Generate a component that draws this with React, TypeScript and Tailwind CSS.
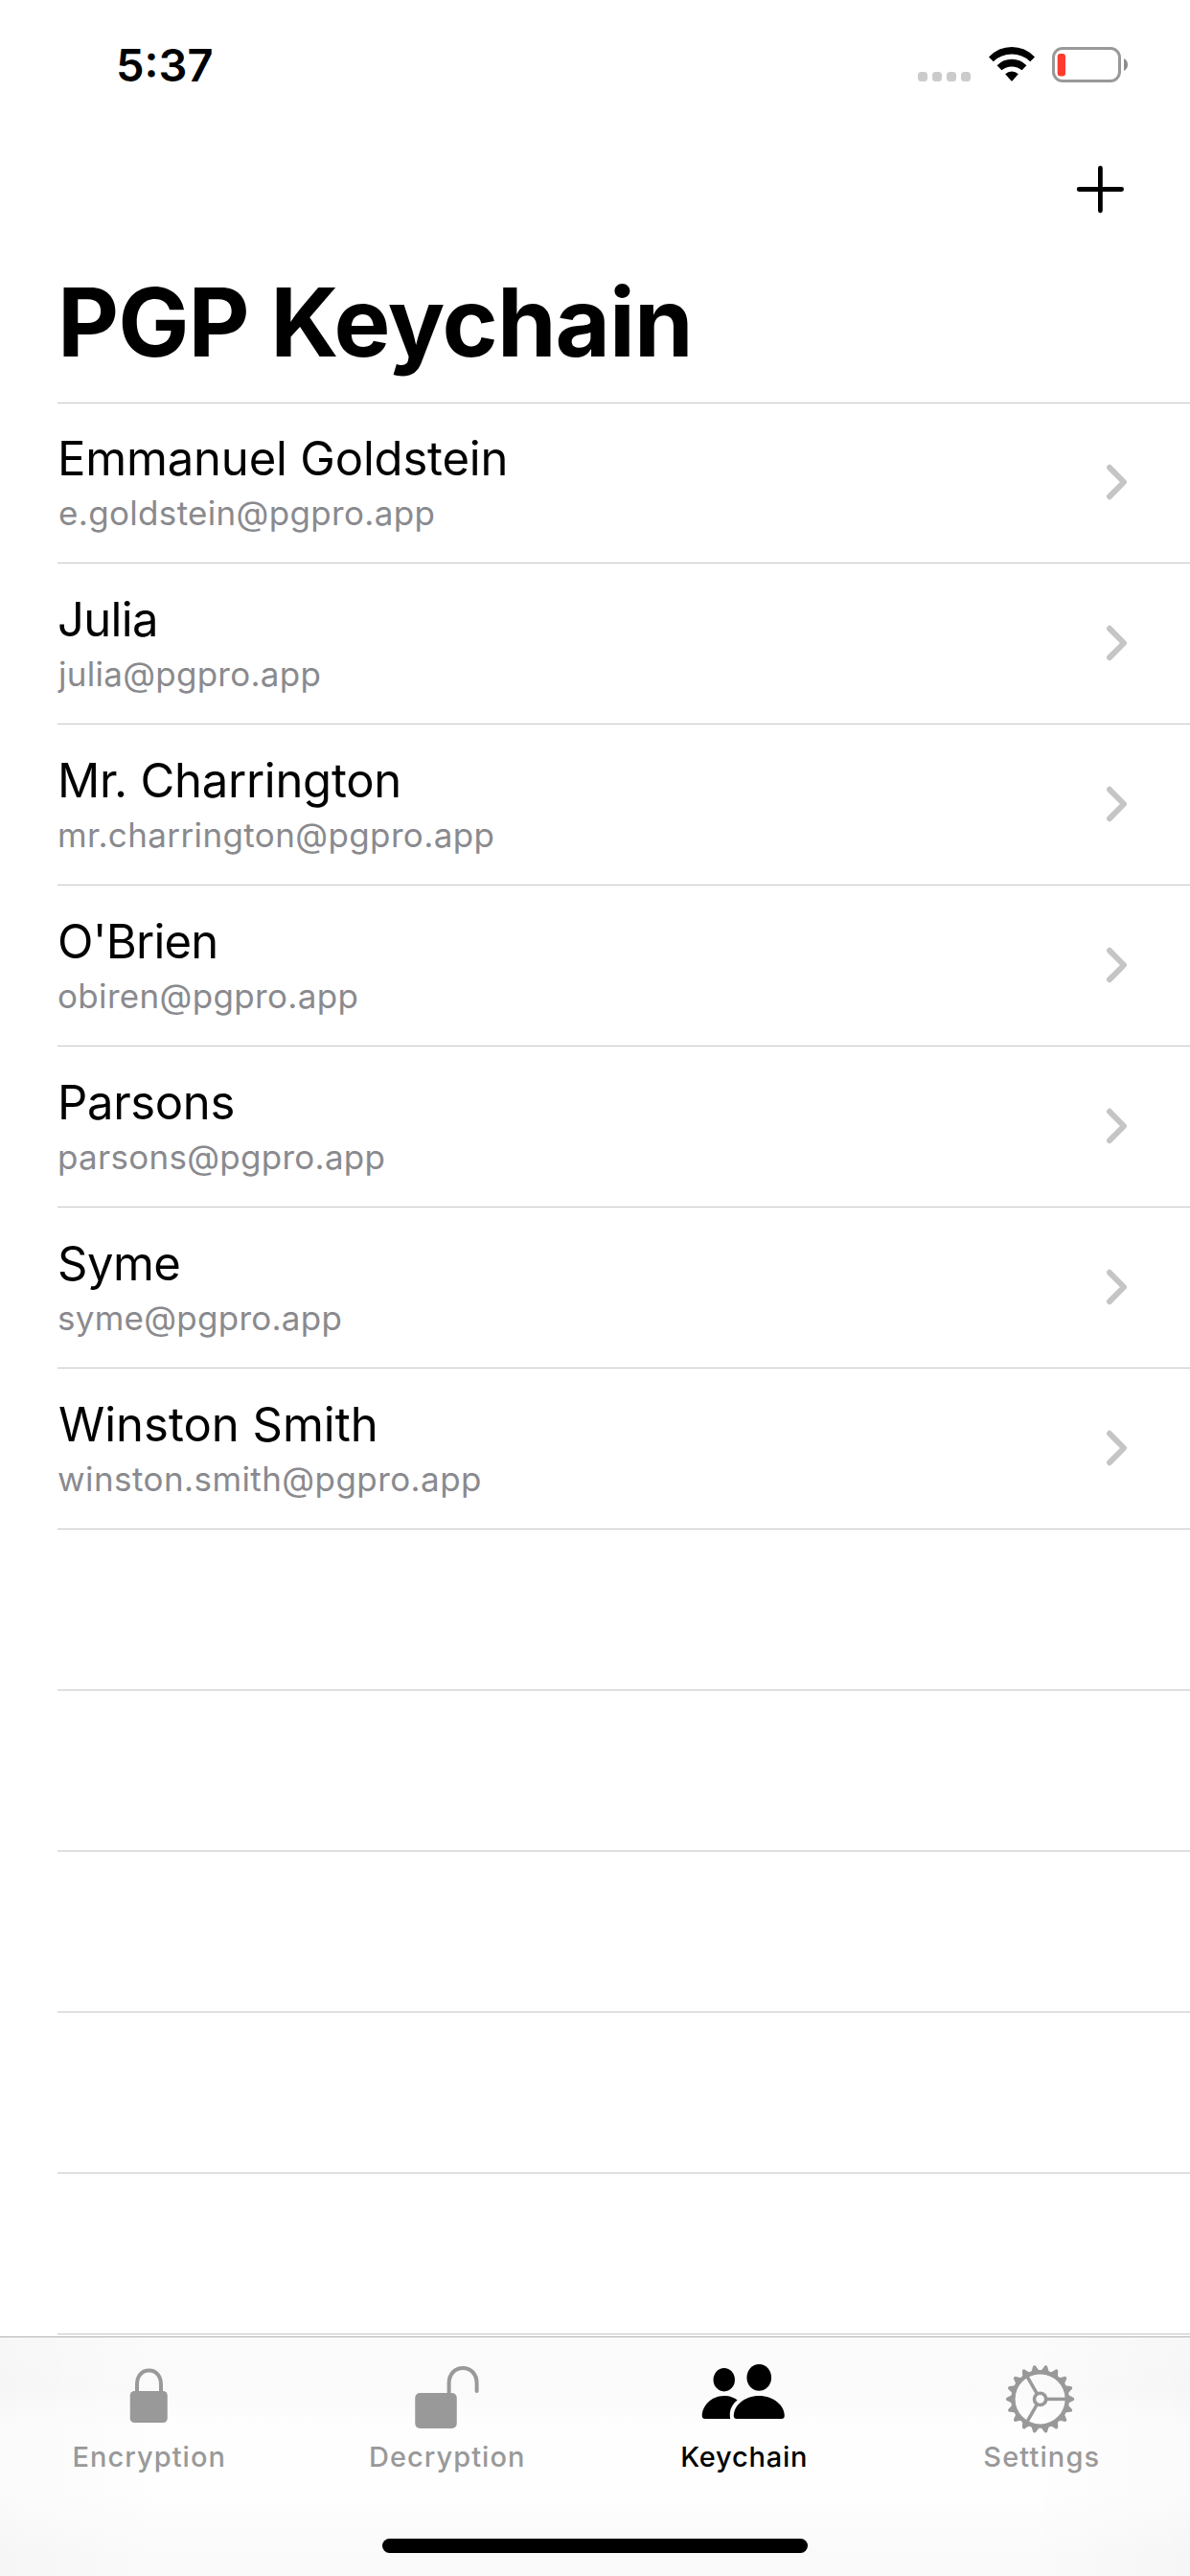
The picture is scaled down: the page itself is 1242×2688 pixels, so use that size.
import type { ReactNode } from "react";

type Contact = { name: string; email: string; nameClass: string; emailClass: string };

const contacts: Contact[] = [
  { name: "Emmanuel Goldstein", email: "e.goldstein@pgpro.app", nameClass: "tracking-[-0.18px]", emailClass: "pl-px tracking-[0.33px]" },
  { name: "Julia", email: "julia@pgpro.app", nameClass: "tracking-[-0.69px]", emailClass: "pl-px tracking-[0.27px]" },
  { name: "Mr. Charrington", email: "mr.charrington@pgpro.app", nameClass: "tracking-[-0.27px]", emailClass: "tracking-[0.38px]" },
  { name: "O'Brien", email: "obiren@pgpro.app", nameClass: "tracking-[-0.76px]", emailClass: "tracking-[0.33px]" },
  { name: "Parsons", email: "parsons@pgpro.app", nameClass: "tracking-[-0.34px]", emailClass: "tracking-[0.28px]" },
  { name: "Syme", email: "syme@pgpro.app", nameClass: "tracking-[-0.53px]", emailClass: "tracking-[0.26px]" },
  { name: "Winston Smith", email: "winston.smith@pgpro.app", nameClass: "pl-px tracking-[-0.02px]", emailClass: "tracking-[0.42px]" },
];

const EMPTY_ROWS = 5;

function SignalDots() {
  return (
    <div className="flex gap-[5px] pt-[75px]">
      {[0, 1, 2, 3].map((i) => (
        <span key={i} className="size-[10px] rounded-[3.5px] bg-[#cbcbcb]" />
      ))}
    </div>
  );
}

function Wifi() {
  return (
    <svg className="ml-[19px] mt-[49px] h-9 w-12" viewBox="0 0 48 36">
      <path d="M0 10.4Q10.2 0 24 0T48 10.4L43.2 15.2Q35 7.6 24 7.6T4.8 15.2Z" />
      <path d="M8.6 19.2Q15.2 12.8 24 12.8T39.4 19.2L34.6 24.2Q30 20.4 24 20.4T13.4 24.2Z" />
      <path d="M17.2 28.2Q20 25.4 24 25.4T30.8 28.2L24.7 35.2Q24 36 23.3 35.2Z" />
    </svg>
  );
}

function Battery() {
  return (
    <svg className="ml-[18px] mt-[49px] h-[37px] w-20" viewBox="0 0 80 37">
      <rect x="1.5" y="1.5" width="69" height="34" rx="9.5" fill="none" stroke="#999" strokeWidth="3" />
      <rect x="5.7" y="7" width="8.3" height="23.5" rx="3" fill="#ff3b30" />
      <path d="M75 12Q79 14.4 79 18.5T75 25Z" fill="#8c8c8c" />
    </svg>
  );
}

function Chevron() {
  return (
    <svg className="mb-[64px] h-10 w-6" viewBox="0 0 24 40" fill="none" stroke="#c5c5c7" strokeWidth="6" strokeLinecap="round" strokeLinejoin="round">
      <path d="M5 4.8 20 20 5 35.2" />
    </svg>
  );
}

function IconBox({ children }: { children: ReactNode }) {
  return (
    <svg className="h-20 w-[90px]" viewBox="0 0 90 80" fill="currentColor">
      {children}
    </svg>
  );
}

function LockIcon() {
  return (
    <IconBox>
      <rect x="25.75" y="35" width="39" height="33" rx="4.5" />
      <path d="M33 37V28C33 19 38.5 13.6 45.5 13.6S58 19 58 28V37" fill="none" stroke="currentColor" strokeWidth="4" />
    </IconBox>
  );
}

function UnlockIcon() {
  return (
    <IconBox>
      <rect x="12.25" y="37" width="43.5" height="37" rx="5" />
      <path d="M47.6 39V27C47.6 17 54 11 62.1 11S76.6 17 76.6 27V35" fill="none" stroke="currentColor" strokeWidth="4" strokeLinecap="round" />
    </IconBox>
  );
}

function PeopleIcon() {
  return (
    <IconBox>
      <ellipse cx="24.75" cy="23.2" rx="11.2" ry="12.2" />
      <ellipse cx="61.25" cy="20.9" rx="12.8" ry="13.9" />
      <path d="M5 64Q1.75 64 1.75 61C1.75 51 11 40 24.75 40C30 40 34.6 41.5 38.6 44.4C32.5 49 29.6 56 31.2 64Z" />
      <path d="M38 64Q34.75 64 34.75 61C34.75 50 46 40 61.25 40S87.75 50 87.75 61Q87.75 64 84.5 64Z" />
    </IconBox>
  );
}

function GearIcon() {
  const teeth = Array.from({ length: 18 }, (_, i) => i * 20);
  return (
    <IconBox>
      <g transform="translate(43.6 43.4)">
        <circle r="28.2" fill="none" stroke="currentColor" strokeWidth="4.4" />
        <circle r="6.1" fill="none" stroke="currentColor" strokeWidth="3.6" />
        {teeth.map((a) => (
          <path key={a} transform={`rotate(${a})`} d="M29 -4.8 30.6 -3.6 34.2 -1.8Q35.6 -1.4 35.6 0T34.2 1.8L30.6 3.6 29 4.8Z" />
        ))}
        {[0, 120, 240].map((a) => (
          <path key={a} transform={`rotate(${a})`} d="M7 0H28" stroke="currentColor" strokeWidth="3.5" />
        ))}
      </g>
    </IconBox>
  );
}

const tabs = [
  { label: "Encryption", icon: <LockIcon />, color: "text-[#999999]", labelClass: "pl-px tracking-[1.02px]" },
  { label: "Decryption", icon: <UnlockIcon />, color: "text-[#999999]", labelClass: "pl-[2px] tracking-[1.04px]" },
  { label: "Keychain", icon: <PeopleIcon />, color: "text-black", labelClass: "pl-px tracking-[0.77px]" },
  { label: "Settings", icon: <GearIcon />, color: "text-[#999999]", labelClass: "pl-px tracking-[1.1px]" },
];

export default function App() {
  return (
    <div className="flex h-[2688px] w-[1242px] flex-col overflow-hidden bg-white font-['Inter',sans-serif] text-black">
      <header className="flex h-[421px] shrink-0 flex-col">
        <div className="flex h-[120px] shrink-0 justify-between pl-[121px] pr-[64px]">
          <time className="pt-[39px] text-[47px] leading-[57px] font-semibold">5:37</time>
          <div className="flex">
            <SignalDots />
            <Wifi />
            <Battery />
          </div>
        </div>
        <div className="flex h-[156px] shrink-0 justify-end pr-[68px] pt-[52px]">
          <button aria-label="Add key" className="size-[51px]">
            <svg className="size-[51px]" viewBox="0 0 51 51" stroke="#000" strokeWidth="4.8" strokeLinecap="round">
              <path d="M25.4 3.4V47.8M3.2 25.5H47.6" />
            </svg>
          </button>
        </div>
        <h1 className="pl-[60px] text-[99px] leading-[120px] font-bold tracking-[-0.96px]">PGP Keychain</h1>
        <div className="mt-auto ml-[60px] h-px bg-[#c6c6c8]" />
      </header>

      <ul className="flex-1 pl-[60px]">
        {contacts.map((c) => (
          <li key={c.name} className="flex h-[168px] items-end justify-between border-b border-[#c6c6c8] pr-[65px] first:h-[167px]">
            <div className="flex flex-col gap-[6px] pb-[31px]">
              <span className={`text-[49px] leading-[59px] whitespace-nowrap ${c.nameClass}`}>{c.name}</span>
              <span className={`text-[35px] leading-[42px] whitespace-nowrap text-[#8a8a8e] ${c.emailClass}`}>{c.email}</span>
            </div>
            <Chevron />
          </li>
        ))}
        {Array.from({ length: EMPTY_ROWS }, (_, i) => (
          <li key={i} className="h-[168px] border-b border-[#c6c6c8]" />
        ))}
      </ul>

      <footer className="flex h-[250px] shrink-0 flex-col items-center border-t border-[#b2b2b2] bg-[linear-gradient(90deg,rgba(0,0,0,0.016),transparent_14%,transparent_86%,rgba(0,0,0,0.014)),linear-gradient(180deg,#fbfbfb,#fafafa_22%,#fefefe_36%,#fefefe_66%,#fafafa_90%)]">
        <nav className="grid w-full grid-cols-4 pt-[21px]">
          {tabs.map((t) => (
            <button key={t.label} className={`flex flex-col items-center gap-[6px] ${t.color}`}>
              {t.icon}
              <span className={`text-[29px] leading-[35px] font-medium ${t.labelClass}`}>{t.label}</span>
            </button>
          ))}
        </nav>
        <div className="mt-[68px] h-[15px] w-[444px] rounded-full bg-black" />
      </footer>
    </div>
  );
}
